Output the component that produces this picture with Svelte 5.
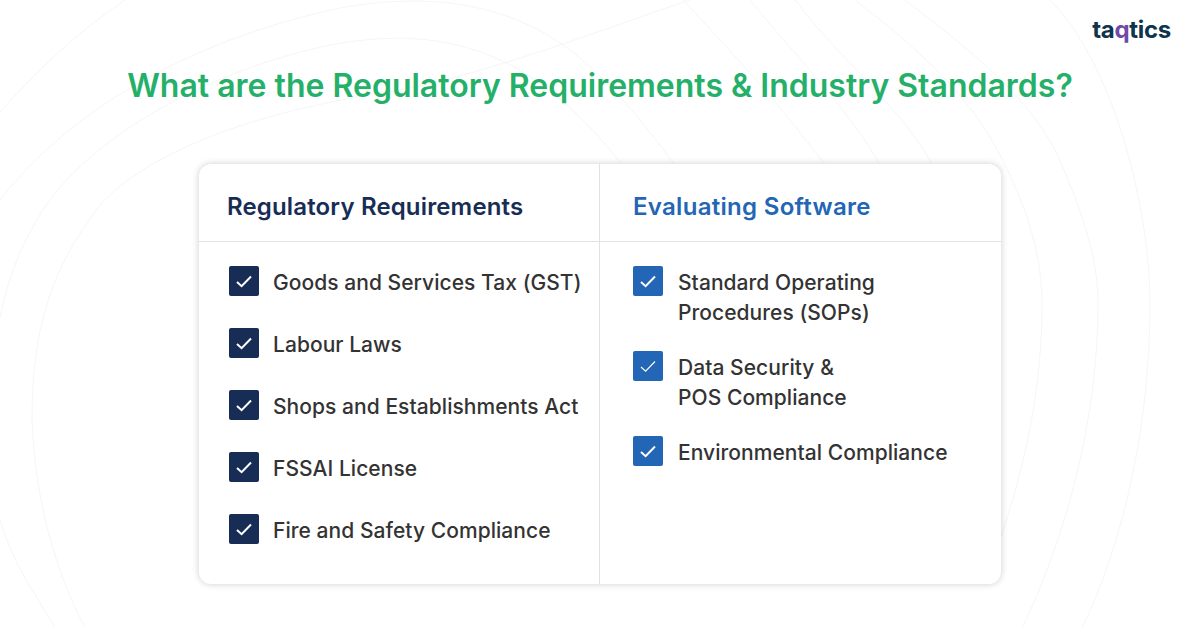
<script>
	const regulatory = [
		"Goods and Services Tax (GST)",
		"Labour Laws",
		"Shops and Establishments Act",
		"FSSAI License",
		"Fire and Safety Compliance",
	];

	const software = [
		{ lines: ["Standard Operating", "Procedures (SOPs)"] },
		{ lines: ["Data Security &", "POS Compliance"], thin: true },
		{ lines: ["Environmental Compliance"] },
	];

	// faint contour rings behind the card
	const contours = [
		"M0 112C35 72 80 30 125 0",
		"M0 200C70 110 190 40 340 8C420 -6 500 -2 570 50C610 80 645 125 675 165",
		"M0 318C10 270 25 235 50 200C90 145 190 75 330 45C400 32 470 35 535 80C565 100 595 130 622 165",
		"M32 420C32 330 50 270 100 205C150 150 260 110 400 90C500 70 600 30 690 0",
		"M0 520C15 570 40 600 55 628",
		"M32 420C35 500 55 570 85 628",
		"M683 0C730 50 785 110 825 165",
		"M750 0C790 50 850 110 880 165",
		"M795 0C840 60 905 110 935 170",
		"M855 0C920 50 975 100 1005 165C1030 215 1042 260 1042 305C1042 400 1020 480 1000 540",
		"M905 0C970 50 1035 100 1062 165C1085 220 1098 260 1098 305C1098 420 1065 540 1022 628",
		"M1050 0C1110 60 1150 200 1150 305C1150 420 1125 540 1082 628",
	];
</script>

<main class="page">
	<svg class="contours" width="1200" height="628" viewBox="0 0 1200 628" aria-hidden="true">
		{#each contours as d}
			<path {d} />
		{/each}
	</svg>

	<div class="logo">ta<span class="logo-q">q</span>tics</div>

	<h1>What are the Regulatory Requirements &amp; Industry Standards?</h1>

	<section class="card">
		<div class="col">
			<h2 class="navy">Regulatory Requirements</h2>
			<ul class="list left">
				{#each regulatory as item}
					<li>
						<span class="check navy-bg">
							<svg width="16" height="13" viewBox="0 0 16 13"><path d="M1 7 5.6 11.2 15 1.5" /></svg>
						</span>
						<span class="label">{item}</span>
					</li>
				{/each}
			</ul>
		</div>
		<div class="col">
			<h2 class="blue">Evaluating Software</h2>
			<ul class="list right">
				{#each software as item}
					<li>
						<span class="check blue-bg" class:thin={item.thin}>
							<svg width="16" height="13" viewBox="0 0 16 13"><path d="M1 7 5.6 11.2 15 1.5" /></svg>
						</span>
						<span class="label">
							{#each item.lines as line}
								<span class="line">{line}</span>
							{/each}
						</span>
					</li>
				{/each}
			</ul>
		</div>
	</section>
</main>

<style>
	:global(body) {
		background: #fff;
	}

	.page {
		position: relative;
		width: 1200px;
		height: 628px;
		overflow: hidden;
		background: #fff;
		font-family: "Inter", "Noto Sans", sans-serif;
		display: flex;
		flex-direction: column;
		align-items: center;
	}

	.contours {
		position: absolute;
		inset: 0;
	}

	.contours path {
		fill: none;
		stroke: #f3f7f5;
		stroke-width: 1;
	}

	.logo {
		position: absolute;
		top: 14px;
		right: 29px;
		font-size: 24px;
		font-weight: 700;
		line-height: 32px;
		letter-spacing: -0.3px;
		color: #10344d;
	}

	.logo-q {
		color: #6f4aa8;
	}

	h1 {
		position: relative;
		margin: 64px 0 0;
		height: 42px;
		font-size: 32px;
		font-weight: 600;
		line-height: 43px;
		color: #25b06a;
		white-space: nowrap;
	}

	.card {
		position: relative;
		margin-top: 58px;
		width: 802px;
		height: 420px;
		display: grid;
		grid-template-columns: 400px 402px;
		background: #fff;
		border-radius: 12px;
		box-shadow: 0 0 7px rgba(0, 0, 0, 0.2);
	}

	.col + .col {
		border-left: 1px solid #e2e2e2;
	}

	h2 {
		margin: 0;
		height: 77px;
		padding-left: 28px;
		font-size: 24px;
		font-weight: 600;
		line-height: 85px;
		letter-spacing: 0.15px;
		border-bottom: 1px solid #e2e2e2;
		white-space: nowrap;
	}

	.col + .col h2 {
		padding-left: 33px;
		letter-spacing: 0.3px;
	}

	.navy {
		color: #182d56;
	}

	.blue {
		color: #2366b5;
	}

	.list {
		list-style: none;
		margin: 0;
		padding: 24px 0 0 30px;
		display: flex;
		flex-direction: column;
		color: #333;
		font-size: 21px;
		font-weight: 500;
		line-height: 30px;
		letter-spacing: 0.05px;
	}

	.list.left {
		gap: 30px;
	}

	.list.right {
		gap: 23px;
		padding-left: 33px;
	}

	li {
		display: flex;
		gap: 14px;
		white-space: nowrap;
	}

	.list.right li {
		gap: 15px;
	}

	.check {
		flex: none;
		width: 30px;
		height: 30px;
		border-radius: 2px;
		display: flex;
		align-items: center;
		justify-content: center;
	}

	.check path {
		fill: none;
		stroke: #fff;
		stroke-width: 2;
	}

	.check.thin path {
		stroke-width: 1.1;
	}

	.navy-bg {
		background: #182d56;
	}

	.blue-bg {
		background: #2366b5;
	}

	.label {
		display: block;
		margin-top: 2px;
	}

	.line {
		display: block;
	}
</style>
